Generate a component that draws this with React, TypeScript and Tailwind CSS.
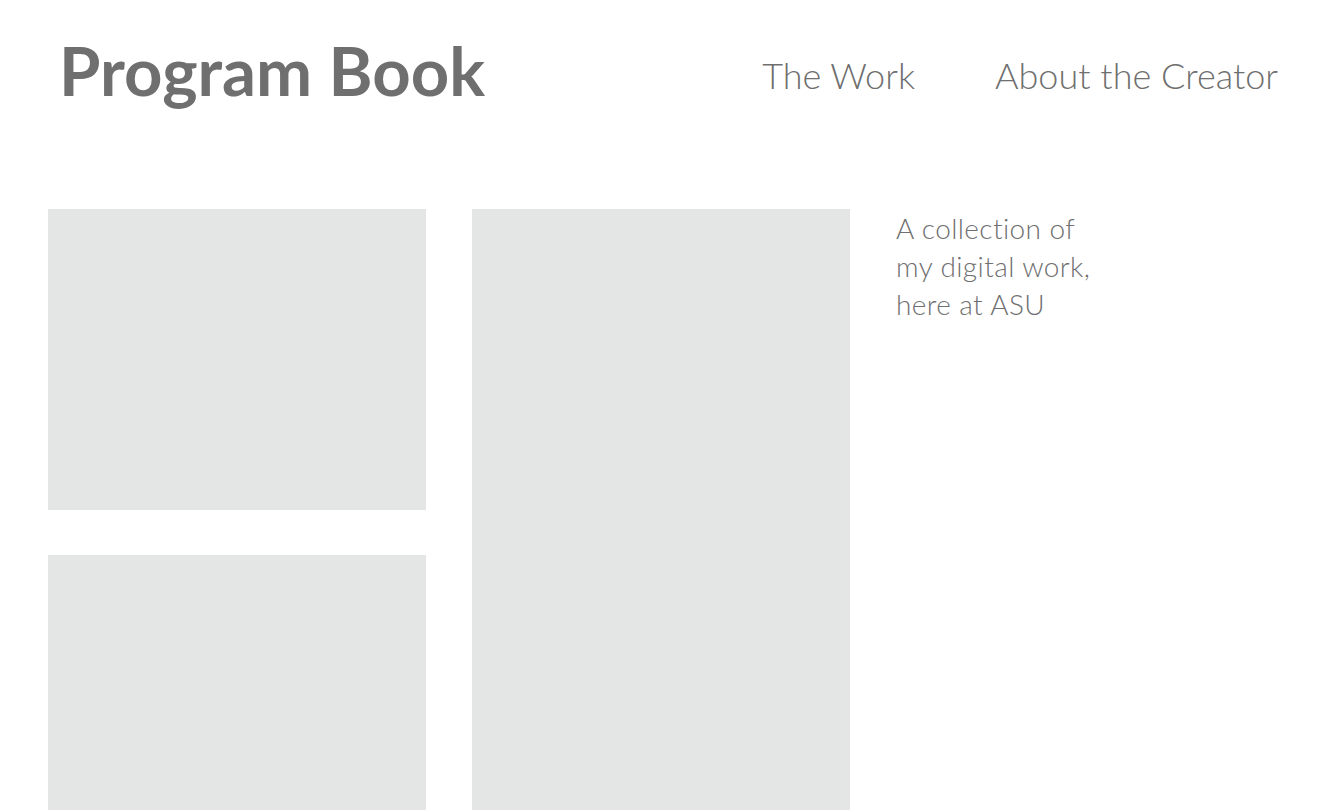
export default function App() {
  return (
    <div className="min-h-[810px] h-[810px] overflow-hidden bg-white font-['Lato','Noto_Sans',sans-serif] text-[#6f6f6f]">
      <header className="flex items-start justify-between pl-[59px] pr-[46px] pt-[30px]">
        <h1 className="text-[67px] font-bold leading-[80px]">Program Book</h1>
        <nav className="mt-[23px] flex gap-[80px] text-[36px] font-light leading-[44px]">
          <a>The Work</a>
          <a>About the Creator</a>
        </nav>
      </header>

      <main className="mt-[99px] flex gap-[46px] pl-12">
        <div className="flex w-[378px] flex-col gap-[45px]">
          <div className="h-[301px] bg-[#e4e5e5]" />
          <div className="h-[301px] bg-[#e4e5e5]" />
        </div>
        <div className="h-[640px] w-[378px] bg-[#e4e5e5]" />
        <p className="w-[240px] text-[28px] font-light leading-[38px] tracking-[0.4px]">
          A collection of
          <br />
          my digital work,
          <br />
          here at ASU
        </p>
      </main>
    </div>
  );
}
